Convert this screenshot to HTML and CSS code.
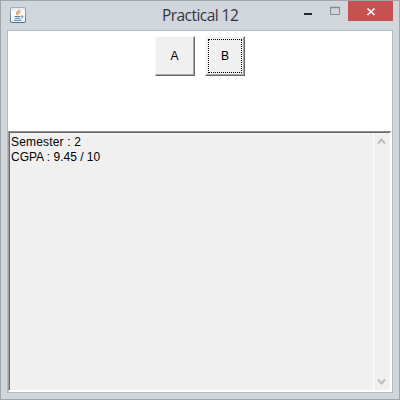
FILE: index.html
```html
<!DOCTYPE html>
<html lang="en">
<head>
<meta charset="utf-8">
<title>Practical 12</title>
<link rel="stylesheet" href="styles.css">
</head>
<body>
<div class="window">
  <header class="titlebar">
    <svg class="app-icon" width="16" height="16" viewBox="0 0 16 16">
      <defs><linearGradient id="g" x1="0" y1="0" x2="0" y2="1"><stop offset="0" stop-color="#dfe5e9"/><stop offset=".35" stop-color="#fff"/><stop offset="1" stop-color="#eef2f5"/></linearGradient>
      <linearGradient id="b" x1="0" y1="0" x2="0" y2="1"><stop offset="0" stop-color="#a3adb5"/><stop offset="1" stop-color="#486f8b"/></linearGradient></defs>
      <rect x=".5" y=".5" width="15" height="15" rx="1.5" fill="url(#g)" stroke="url(#b)"/>
      <path d="M9 2.500c.8 2-3 2.300-2.500 4 .2.700.8 1 1.200 1.700M10.500 4.800C8.500 5.500 8.300 6 9 7.500" fill="none" stroke="#e58a45" stroke-width="1.200"/>
      <path d="M4.500 9.500h6M5 11.300h5M4 13.300h7.500M11 9c2.800-.6 2.500 1.500 0 2.200" fill="none" stroke="#557d9c" stroke-width="1"/>
    </svg>
    <h1 class="title">Practical 12</h1>
    <div class="controls">
      <span class="control"><svg width="22" height="20"><path d="M4 12h8v2H4z" fill="#23262d"/></svg></span>
      <span class="control"><svg width="22" height="20"><path d="M4.500 6.500h9v7h-9z" fill="none" stroke="#858b92"/><path d="M4 6.500h10" stroke="#858b92" stroke-width="1.500"/></svg></span>
      <span class="control close"><svg width="45" height="20"><path d="M19.500 7.500l7 6.500M26.500 7.500l-7 6.500" stroke="#fff" stroke-width="1.700"/></svg></span>
    </div>
  </header>
  <main class="content">
    <div class="buttons">
      <button class="button">A</button>
      <button class="button focused"><span class="focus">B</span></button>
    </div>
    <section class="textarea">
      <div class="text"><span class="semester">Semester : 2</span><br>CGPA : 9.45 / 10</div>
      <div class="scrollbar">
        <svg width="16" height="17"><path d="M4 10.500l3.500-4 3.500 4" fill="none" stroke="#bdbdbd" stroke-width="2"/></svg>
        <svg width="16" height="17"><path d="M4 6.500l3.500 4 3.500-4" fill="none" stroke="#bdbdbd" stroke-width="2"/></svg>
      </div>
    </section>
  </main>
</div>
</body>
</html>
```
FILE: styles.css
```css
* { box-sizing: border-box; }
body { margin: 0; font-family: "Liberation Sans", Arial, sans-serif; }
.window {
  width: 400px;
  height: 400px;
  border: 1px solid #a2a6ac;
  background: #d1d6dc;
  padding: 0 6px 6px;
  display: flex;
  flex-direction: column;
}
.titlebar {
  height: 29px;
  flex: none;
  display: grid;
  grid-template-columns: 16px 1fr auto;
}
.app-icon { margin: 6px 0 0 3px; }
.title {
  margin: 4px 0 0 139px;
  font: 400 15.5px/21px "Open Sans", sans-serif;
  letter-spacing: -0.55px;
  color: #33373d;
  white-space: nowrap;
}
.controls { display: flex; height: 20px; }
.control { display: flex; }
.controls .control:nth-child(2) { margin-left: 4px; }
.close { background: #c75050; }
.content {
  flex: 1;
  border: 1px solid #b2bbc2;
  background: #fff;
  display: flex;
  flex-direction: column;
}
.buttons {
  height: 100px;
  flex: none;
  padding-top: 5px;
  display: flex;
  justify-content: center;
  gap: 10px;
}
.button {
  width: 40px;
  height: 40px;
  padding: 0 1px 0 0;
  border: 1px solid;
  border-color: #fafafa #696969 #696969 #fafafa;
  box-shadow: inset -1px -1px #a8a8a8;
  background: #f0f0f0;
  color: #000;
  font: 12px/14px "Liberation Sans", Arial, sans-serif;
}
.focused { padding: 2px; }
.focus {
  display: grid;
  place-items: center;
  width: 100%;
  height: 100%;
  border: 1px dotted #000;
}
.textarea {
  flex: 1;
  border: solid;
  border-width: 1px 2px 2px 1px;
  border-color: #8c8c8c #fff #fff #a0a0a0;
  box-shadow: inset 1px 1px #696969;
  background: #f0f0f0;
  display: flex;
}
.text {
  flex: 1;
  padding: 3px 0 0 2px;
  font-size: 12px;
  line-height: 15px;
  color: #000;
}
.semester { letter-spacing: 0.17px; }
.scrollbar {
  width: 17px;
  margin: 1px 0 0;
  border-left: 1px solid #fff;
  display: flex;
  flex-direction: column;
  justify-content: space-between;
}
```
